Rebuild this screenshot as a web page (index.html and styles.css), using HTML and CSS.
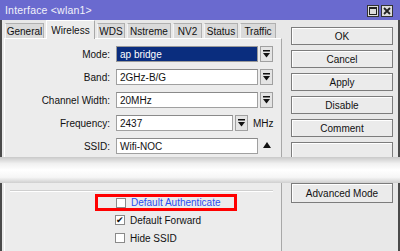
FILE: index.html
```html
<!DOCTYPE html>
<html lang="en">
<head>
    <meta charset="UTF-8">
    <title>Interface wlan1</title>
    <link rel="stylesheet" href="styles.css">
</head>
<body>
    <div class="window">
        <div class="titlebar">
            <span class="title">Interface &lt;wlan1&gt;</span>
            <div class="title-btns">
                <span class="tbtn">
                    <svg width="8" height="8" viewBox="0 0 8 8"><rect x="0.5" y="0.5" width="7" height="7" fill="none" stroke="#222"/><line x1="0" y1="1.5" x2="8" y2="1.5" stroke="#222"/></svg>
                </span>
                <span class="tbtn">
                    <svg width="8" height="8" viewBox="0 0 8 8"><path d="M1 1 L7 7 M7 1 L1 7" stroke="#222" stroke-width="1.8"/></svg>
                </span>
            </div>
        </div>

        <div class="top">
            <div class="main">
                <div class="tabs">
                    <span class="tab" style="width:39px">General</span>
                    <span class="tab active" style="width:49px">Wireless</span>
                    <span class="tab" style="width:28px">WDS</span>
                    <span class="tab" style="width:44px">Nstreme</span>
                    <span class="tab" style="width:29px">NV2</span>
                    <span class="tab" style="width:34px">Status</span>
                    <span class="tab" style="width:36px">Traffic</span>
                </div>
                <div class="panel">
                    <div class="row">
                        <label class="lbl">Mode:</label>
                        <div class="field selected">ap bridge</div>
                        <span class="drop"><svg width="7" height="8" viewBox="0 0 7 8"><rect x="0" y="0" width="7" height="1.5" fill="#111"/><path d="M0 3 H7 L3.5 7.5 Z" fill="#111"/></svg></span>
                    </div>
                    <div class="row">
                        <label class="lbl">Band:</label>
                        <div class="field">2GHz-B/G</div>
                        <span class="drop"><svg width="7" height="8" viewBox="0 0 7 8"><rect x="0" y="0" width="7" height="1.5" fill="#111"/><path d="M0 3 H7 L3.5 7.5 Z" fill="#111"/></svg></span>
                    </div>
                    <div class="row">
                        <label class="lbl">Channel Width:</label>
                        <div class="field">20MHz</div>
                        <span class="drop"><svg width="7" height="8" viewBox="0 0 7 8"><rect x="0" y="0" width="7" height="1.5" fill="#111"/><path d="M0 3 H7 L3.5 7.5 Z" fill="#111"/></svg></span>
                    </div>
                    <div class="row">
                        <label class="lbl">Frequency:</label>
                        <div class="field short">2437</div>
                        <span class="drop"><svg width="7" height="8" viewBox="0 0 7 8"><rect x="0" y="0" width="7" height="1.5" fill="#111"/><path d="M0 3 H7 L3.5 7.5 Z" fill="#111"/></svg></span>
                        <span class="unit">MHz</span>
                    </div>
                    <div class="row">
                        <label class="lbl">SSID:</label>
                        <div class="field">Wifi-NOC</div>
                        <span class="up"><svg width="8" height="6" viewBox="0 0 8 6"><path d="M0 6 H8 L4 0 Z" fill="#111"/></svg></span>
                    </div>
                </div>
            </div>
            <div class="side">
                <div class="btn">OK</div>
                <div class="btn">Cancel</div>
                <div class="btn">Apply</div>
                <div class="btn spaced">Disable</div>
                <div class="btn">Comment</div>
                <div class="btn partial"></div>
            </div>
        </div>

        <div class="cut"></div>

        <div class="bottom">
            <div class="main lower">
                <div class="sep"></div>
                <div class="check-row marked">
                    <span class="box"></span>
                    <span class="check-text link">Default Authenticate</span>
                </div>
                <div class="check-row">
                    <span class="box">&#10004;</span>
                    <span class="check-text">Default Forward</span>
                </div>
                <div class="check-row">
                    <span class="box"></span>
                    <span class="check-text">Hide SSID</span>
                </div>
            </div>
            <div class="side">
                <div class="btn tall">Advanced Mode</div>
            </div>
        </div>
    </div>
</body>
</html>
```

FILE: styles.css
```css
body {
    margin: 0;
    font-family: 'Liberation Sans', Arial, sans-serif;
    font-size: 10px;
    color: #111;
    background: #e8e8e8;
}

.window {
    width: 400px;
    height: 251px;
    overflow: hidden;
    background: #e8e8e8;
}

.titlebar {
    height: 20px;
    background: #6a6acf;
    display: flex;
    align-items: center;
    justify-content: space-between;
    padding: 0 7px 0 5px;
    box-sizing: border-box;
}

.title {
    color: #f2f2fa;
    font-size: 10.5px;
    letter-spacing: 0.2px;
}

.title-btns {
    display: flex;
    gap: 2px;
    margin-top: 2px;
}

.tbtn {
    width: 12px;
    height: 12px;
    box-sizing: border-box;
    background: #dcdcdc;
    border: 1px solid #333;
    display: flex;
    align-items: center;
    justify-content: center;
}

.top,
.bottom {
    display: flex;
    border-left: 2px solid #4a4a4a;
    border-right: 2px solid #4a4a4a;
    padding-left: 2px;
}

.top {
    height: 137px;
    overflow: hidden;
}

.bottom {
    height: 68px;
}

.main {
    width: 278px;
    display: flex;
    flex-direction: column;
}

.tabs {
    height: 20px;
    display: flex;
    align-items: flex-end;
    padding-left: 1px;
    gap: 2px;
}

.tab {
    height: 15px;
    box-sizing: border-box;
    background: #dadada;
    border: 1px solid #b0b0b0;
    border-bottom: none;
    border-left-color: #f4f4f4;
    display: flex;
    align-items: center;
    justify-content: center;
    font-size: 10px;
}

.tab.active {
    height: 19px;
    background: #ececec;
    border-color: #ffffff;
    border-right-color: #a8a8a8;
    margin-bottom: -1px;
    position: relative;
}

.panel {
    flex: 1;
    background: #ececec;
    border-top: 1px solid #ffffff;
    border-left: 1px solid #ffffff;
    border-right: 1px solid #a8a8a8;
    padding-top: 7px;
}

.row {
    height: 16px;
    display: flex;
    align-items: center;
    margin-bottom: 7px;
}

.lbl {
    width: 105px;
    text-align: right;
    margin-right: 6px;
}

.field {
    width: 142px;
    height: 16px;
    box-sizing: border-box;
    background: #ffffff;
    border: 1px solid #a0a0a0;
    border-top-color: #8a8a8a;
    padding-left: 3px;
    display: flex;
    align-items: center;
}

.field.selected {
    background: #0a2d7e;
    color: #ffffff;
    border-color: #9a9a9a;
}

.field.short {
    width: 117px;
}

.drop {
    width: 13px;
    height: 16px;
    box-sizing: border-box;
    margin-left: 2px;
    background: #e4e4e4;
    border: 1px solid #a0a0a0;
    display: flex;
    align-items: center;
    justify-content: center;
}

.unit {
    margin-left: 5px;
}

.up {
    margin-left: 5px;
    margin-bottom: 2px;
    display: flex;
}

.side {
    margin-left: 9px;
    width: 102px;
    padding-top: 7px;
}

.bottom .side {
    padding-top: 0;
}

.btn {
    height: 18px;
    box-sizing: border-box;
    border: 1px solid #7c7c7c;
    box-shadow: inset 1px 1px #ffffff;
    background: #ebebeb;
    display: flex;
    align-items: center;
    justify-content: center;
    margin-bottom: 5px;
}

.btn.spaced {
    margin-top: 4px;
}

.btn.partial {
    margin-top: 3px;
}

.btn.tall {
    height: 20px;
}

.cut {
    height: 26px;
    background: linear-gradient(#c9c9c9 0%, #f0f0f0 25%, #ffffff 50%, #f6f6f6 78%, #cfcfcf 100%);
}

.lower {
    background: #ececec;
    border-right: 1px solid #a8a8a8;
    border-left: 1px solid #ffffff;
    box-sizing: border-box;
}

.sep {
    margin: 7px 0 0 5px;
    width: 263px;
    border-top: 1px solid #cfcfcf;
    border-bottom: 1px solid #ffffff;
}

.check-row {
    height: 18px;
    display: flex;
    align-items: center;
    padding-left: 110px;
}

.check-row.marked {
    margin-top: 2px;
    margin-left: 90px;
    width: 142px;
    height: 17px;
    box-sizing: border-box;
    border: 3px solid #ff0000;
    padding-left: 18px;
}

.box {
    width: 10px;
    height: 10px;
    box-sizing: border-box;
    background: #ffffff;
    border: 1px solid #8a8a8a;
    font-size: 9px;
    line-height: 8px;
    text-align: center;
    color: #111;
}

.check-text {
    margin-left: 5px;
}

.link {
    color: #2a4ff0;
}
```
